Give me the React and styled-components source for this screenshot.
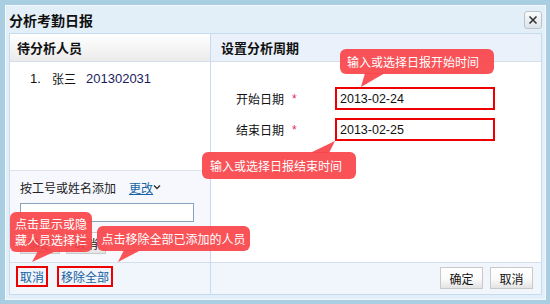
import React from "react";
import styled, { createGlobalStyle } from "styled-components";

const Global = createGlobalStyle`
  html, body { margin: 0; padding: 0; background: #a9cde1; }
  body { font-family: "Liberation Sans", "Noto Sans CJK SC", sans-serif; font-size: 12px; color: #222; }
  * { box-sizing: border-box; }
`;

const Page = styled.div`
  position: relative;
  width: 550px;
  height: 304px;
  padding: 5px 4px 4px 5px;
`;

const Dialog = styled.div`
  width: 541px;
  height: 295px;
  border: 1px solid #f2f8fc;
  background: #e3eff8;
  display: flex;
  flex-direction: column;
`;

const TitleBar = styled.div`
  height: 27px;
  display: flex;
  align-items: center;
  justify-content: space-between;
  padding: 0 3px 0 3px;
`;

const Title = styled.div`
  font-family: "Noto Sans CJK SC", sans-serif;
  font-weight: bold;
  font-size: 14px;
  line-height: 18px;
  color: #111;
`;

const CloseBtn = styled.div`
  width: 18px;
  height: 18px;
  margin-top: 1px;
  border: 1px solid #b9c3cc;
  border-radius: 3px;
  background: linear-gradient(#fafcfd, #dde3e8);
  display: flex;
  align-items: center;
  justify-content: center;
`;

const Panel = styled.div`
  flex: 1;
  margin: 0 3px 4px 3px;
  border: 1px solid #c5dcee;
  display: flex;
  background: #fff;
`;

const Column = styled.div`
  display: flex;
  flex-direction: column;
  width: ${(p) => p.$w || "auto"};
  flex: ${(p) => (p.$w ? "none" : "1")};
  border-right: ${(p) => (p.$divider ? "1px solid #c5dcee" : "none")};
`;

const Header = styled.div`
  height: 28px;
  flex: none;
  border-bottom: 1px solid #d3e0ec;
  padding-left: ${(p) => p.$pad}px;
  display: flex;
  align-items: center;
  font-family: "Noto Sans CJK SC", sans-serif;
  font-weight: bold;
  font-size: 13px;
  color: #111;
  background: ${(p) => (p.$alt ? "#eaf1fb" : "linear-gradient(#ffffff, #ebebeb)")};
`;

const Body = styled.div`
  flex: 1;
  display: flex;
  flex-direction: column;
`;

const List = styled.div`
  flex: 1;
  padding: 8px 0 0 20px;
`;

const ListItem = styled.div`
  display: flex;
  align-items: center;
  font-size: 13px;
  line-height: 18px;
  color: #111;
  span:first-child { width: 22px; }
  span:nth-child(2) { width: 34px; font-family: "Noto Sans CJK SC", sans-serif; font-size: 12px; }
  span:nth-child(3) { color: #1b1b5e; }
`;

const Search = styled.div`
  height: 92px;
  flex: none;
  border-top: 1px solid #dbe3ef;
  background: #f6f8fe;
  padding: 8px 0 0 10px;
  display: flex;
  flex-direction: column;
`;

const SearchLabel = styled.div`
  display: flex;
  align-items: center;
  height: 16px;
  font-family: "Noto Sans CJK SC", sans-serif;
  font-size: 12px;
  color: #222;
`;

const Link = styled.a`
  color: #1563a5;
  text-decoration: underline;
  margin-left: 13px;
  display: inline-flex;
  align-items: center;
  cursor: pointer;
`;

const TextBox = styled.div`
  width: 174px;
  height: 19px;
  margin-top: 8px;
  border: 1px solid #8aa3bd;
  background: #fff;
`;

const BtnRow = styled.div`
  display: flex;
  gap: 6px;
  margin-top: 10px;
`;

const Button = styled.div`
  width: ${(p) => p.$w || 40}px;
  height: 22px;
  border: 1px solid #c9c9c9;
  background: linear-gradient(#ffffff 0%, #fafafa 55%, #e3e3e3 100%);
  display: flex;
  align-items: center;
  justify-content: center;
  font-family: "Noto Sans CJK SC", sans-serif;
  font-size: 12px;
  color: #111;
`;

const Footer = styled.div`
  height: 32px;
  flex: none;
  border-top: 1px solid #d3e0ec;
  background: #f1f5fc;
  display: flex;
  align-items: flex-start;
  gap: ${(p) => p.$gap}px;
  justify-content: ${(p) => (p.$right ? "flex-end" : "flex-start")};
  padding: ${(p) => (p.$right ? "4px 8px 0 0" : "3px 0 0 6px")};
`;

const BoxLink = styled.div`
  height: 21px;
  padding: 0 2px;
  border: 2px solid #ee0000;
  display: flex;
  align-items: center;
  font-family: "Noto Sans CJK SC", sans-serif;
  font-size: 12px;
  color: #15609f;
`;

const Form = styled.div`
  padding: 25px 0 0 25px;
  display: flex;
  flex-direction: column;
  gap: 8px;
`;

const FieldRow = styled.div`
  display: flex;
  align-items: center;
`;

const Label = styled.div`
  width: 99px;
  font-family: "Noto Sans CJK SC", sans-serif;
  font-size: 12px;
  color: #111;
  display: flex;
  align-items: center;
`;

const Star = styled.span`
  color: #e22d5c;
  margin-left: 8px;
  font-family: "Liberation Sans", sans-serif;
`;

const DateInput = styled.div`
  width: 160px;
  height: 23px;
  border: 2px solid #ee0000;
  padding-left: 3px;
  display: flex;
  align-items: center;
  font-size: 12.5px;
  color: #111;
`;

const Tip = styled.div`
  position: absolute;
  left: ${(p) => p.$x}px;
  top: ${(p) => p.$y}px;
  width: ${(p) => p.$w}px;
  height: ${(p) => p.$h}px;
  padding: 0 ${(p) => p.$px || 6}px;
  background: rgba(248, 68, 74, 0.92);
  border-radius: 6px;
  color: #fff;
  font-family: "Noto Sans CJK SC", sans-serif;
  font-size: 12px;
  line-height: 16px;
  display: flex;
  align-items: center;
  justify-content: ${(p) => (p.$left ? "flex-start" : "center")};
  svg { position: absolute; left: 0; top: 0; overflow: visible; }
`;

const Tail = ({ pts }) => (
  <svg width="1" height="1">
    <polygon points={pts} fill="rgba(248, 68, 74, 0.92)" />
  </svg>
);

export default function App() {
  return (
    <>
      <Global />
      <Page>
        <Dialog>
          <TitleBar>
            <Title>分析考勤日报</Title>
            <CloseBtn>
              <svg width="10" height="10" viewBox="0 0 10 10">
                <path d="M1.5 1.5 L8.5 8.5 M8.5 1.5 L1.5 8.5" stroke="#333" strokeWidth="1.6" />
              </svg>
            </CloseBtn>
          </TitleBar>
          <Panel>
            <Column $w="201px" $divider>
              <Header $pad={7}>待分析人员</Header>
              <Body>
                <List>
                  <ListItem>
                    <span>1.</span>
                    <span>张三</span>
                    <span>201302031</span>
                  </ListItem>
                </List>
                <Search>
                  <SearchLabel>
                    按工号或姓名添加
                    <Link>
                      更改
                      <svg width="8" height="6" viewBox="0 0 8 6">
                        <path d="M1 1.5 L4 4.5 L7 1.5" stroke="#333" strokeWidth="1.4" fill="none" />
                      </svg>
                    </Link>
                  </SearchLabel>
                  <TextBox />
                  <BtnRow>
                    <Button>确定</Button>
                    <Button>取消</Button>
                  </BtnRow>
                </Search>
              </Body>
              <Footer $gap={9}>
                <BoxLink>取消</BoxLink>
                <BoxLink>移除全部</BoxLink>
              </Footer>
            </Column>
            <Column>
              <Header $pad={10} $alt>设置分析周期</Header>
              <Body>
                <Form>
                  <FieldRow>
                    <Label>
                      开始日期<Star>*</Star>
                    </Label>
                    <DateInput>2013-02-24</DateInput>
                  </FieldRow>
                  <FieldRow>
                    <Label>
                      结束日期<Star>*</Star>
                    </Label>
                    <DateInput>2013-02-25</DateInput>
                  </FieldRow>
                </Form>
              </Body>
              <Footer $right $gap={7}>
                <Button $w={43}>确定</Button>
                <Button $w={43}>取消</Button>
              </Footer>
            </Column>
          </Panel>
        </Dialog>

        <Tip $x={340} $y={49} $w={154} $h={25} $left $px={7}>
          <Tail pts="25,24 45,24 21,38" />
          输入或选择日报开始时间
        </Tip>
        <Tip $x={202} $y={152} $w={154} $h={27} $left $px={8}>
          <Tail pts="108,1 127,1 133,-11" />
          输入或选择日报结束时间
        </Tip>
        <Tip $x={10} $y={212} $w={82} $h={40} $left $px={5}>
          <Tail pts="28,39 46,39 22,50" />
          点击显示或隐藏人员选择栏
        </Tip>
        <Tip $x={97} $y={226} $w={153} $h={25} $px={4}>
          <Tail pts="27,24 44,24 21,36" />
          点击移除全部已添加的人员
        </Tip>
      </Page>
    </>
  );
}
